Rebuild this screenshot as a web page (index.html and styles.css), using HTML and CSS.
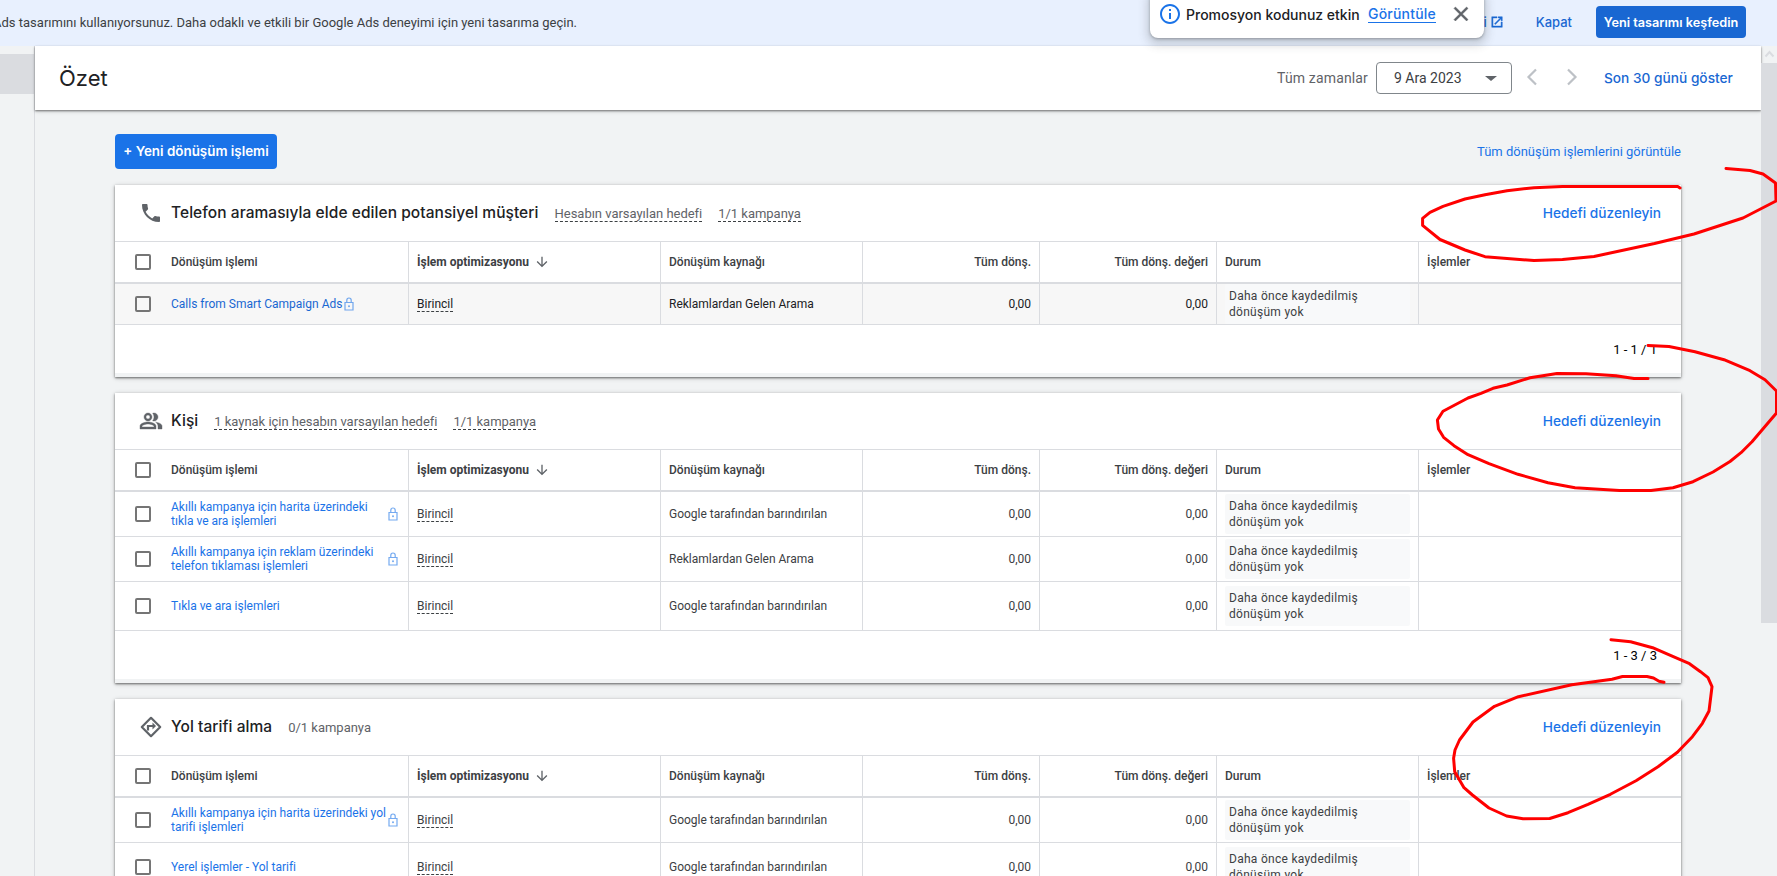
FILE: index.html
```html
<!DOCTYPE html>
<html lang="tr">
<head>
  <meta charset="UTF-8" />
  <meta name="viewport" content="width=device-width, initial-scale=1.0"/>
  <title>Özet - Google Ads</title>
  <link rel="stylesheet" href="styles.css">
</head>
<body>
  <!-- icons used more than once -->
  <svg class="sprite" aria-hidden="true">
    <symbol id="lock" viewBox="0 0 10 14">
      <path d="M1 5.5h8v7.5H1zM2.8 5.5V3.2a2.2 2.2 0 0 1 4.4 0v2.3" fill="none" stroke="currentColor" stroke-width="1.2"/>
      <circle cx="5" cy="9.2" r="1" fill="currentColor"/>
    </symbol>
    <symbol id="sort" viewBox="0 0 24 24">
      <path d="M20 12l-1.41-1.41L13 16.17V4h-2v12.17l-5.58-5.59L4 12l8 8 8-8z" fill="currentColor"/>
    </symbol>
  </svg>

  <div class="banner">
    <p class="banner-text">Ads tasarımını kullanıyorsunuz. Daha odaklı ve etkili bir Google Ads deneyimi için yeni tasarıma geçin.</p>
    <div class="banner-actions">
      <a class="more-link">i
        <svg width="14" height="14" viewBox="0 0 24 24"><path fill="currentColor" d="M19 19H5V5h7V3H3v18h18v-9h-2v7zM14 3v2h3.59l-9.83 9.83 1.41 1.41L19 6.41V10h2V3h-7z" stroke="currentColor" stroke-width=".8"/></svg>
      </a>
      <a class="dismiss">Kapat</a>
      <button class="try-new">Yeni tasarımı keşfedin</button>
    </div>
  </div>

  <div class="toast">
    <svg width="24" height="24" viewBox="0 0 24 24"><path fill="#1a73e8" d="M11 7h2v2h-2zm0 4h2v6h-2zm1-9C6.48 2 2 6.48 2 12s4.48 10 10 10 10-4.48 10-10S17.52 2 12 2zm0 18c-4.41 0-8-3.59-8-8s3.59-8 8-8 8 3.59 8 8-3.59 8-8 8z"/></svg>
    <span class="toast-text">Promosyon kodunuz etkin</span>
    <a class="toast-link">Görüntüle</a>
    <svg width="24" height="24" viewBox="0 0 24 24"><path fill="#5f6368" stroke="#5f6368" stroke-width=".5" d="M19 6.41L17.59 5 12 10.59 6.41 5 5 6.41 10.59 12 5 17.59 6.41 19 12 13.41 17.59 19 19 17.59 13.41 12z"/></svg>
  </div>

  <div class="app">
    <div class="nav"><div class="nav-active"></div></div>

    <div class="main">
      <div class="header">
        <h1>Özet</h1>
        <div class="period">
          <span class="range">Tüm zamanlar</span>
          <div class="date">9 Ara 2023 <span class="caret"></span></div>
          <svg class="prev" width="12" height="18" viewBox="0 0 12 18"><path d="M10 1.5L2.5 9l7.5 7.5" fill="none" stroke="#bdc1c6" stroke-width="2.2"/></svg>
          <svg class="next" width="12" height="18" viewBox="0 0 12 18"><path d="M2 1.5L9.5 9L2 16.5" fill="none" stroke="#bdc1c6" stroke-width="2.2"/></svg>
          <a class="last30">Son 30 günü göster</a>
        </div>
      </div>

      <div class="content">
        <div class="actions">
          <button class="new-action">+ Yeni dönüşüm işlemi</button>
          <a class="view-all">Tüm dönüşüm işlemlerini görüntüle</a>
        </div>

        <div class="card">
          <div class="card-head">
            <svg width="24" height="24" viewBox="0 0 24 24"><path fill="#5f6368" d="M6.62 10.79c1.44 2.83 3.76 5.14 6.59 6.59l2.2-2.2c.27-.27.67-.36 1.02-.24 1.12.37 2.33.57 3.57.57.55 0 1 .45 1 1V20c0 .55-.45 1-1 1-9.39 0-17-7.61-17-17 0-.55.45-1 1-1h3.5c.55 0 1 .45 1 1 0 1.25.2 2.45.57 3.57.11.35.03.74-.25 1.02l-2.2 2.2z"/></svg>
            <h2>Telefon aramasıyla elde edilen potansiyel müşteri</h2>
            <span class="meta dashed">Hesabın varsayılan hedefi</span>
            <span class="meta dashed">1/1 kampanya</span>
            <a class="edit">Hedefi düzenleyin</a>
          </div>
          <div class="row head">
            <div class="cell"><span class="box"></span>Dönüşüm işlemi</div>
            <div class="cell sorted">İşlem optimizasyonu <svg width="16" height="16"><use href="#sort"/></svg></div>
            <div class="cell">Dönüşüm kaynağı</div>
            <div class="cell num">Tüm dönş.</div>
            <div class="cell num">Tüm dönş. değeri</div>
            <div class="cell">Durum</div>
            <div class="cell">İşlemler</div>
          </div>
          <div class="row hovered">
            <div class="cell"><span class="box"></span><a class="name">Calls from Smart Campaign Ads</a><svg class="lock" width="10" height="14"><use href="#lock"/></svg></div>
            <div class="cell"><span class="dashed">Birincil</span></div>
            <div class="cell">Reklamlardan Gelen Arama</div>
            <div class="cell num">0,00</div>
            <div class="cell num">0,00</div>
            <div class="cell"><div class="status">Daha önce kaydedilmiş dönüşüm yok</div></div>
            <div class="cell"></div>
          </div>
          <div class="pager">1 - 1 / 1</div>
        </div>

        <div class="card">
          <div class="card-head">
            <svg width="24" height="24" viewBox="0 0 24 24"><path fill="#5f6368" stroke="#5f6368" stroke-width=".4" d="M16.67 13.13C18.04 14.06 19 15.32 19 17v3h4v-3c0-2.18-3.57-3.47-6.33-3.87zM15 12c2.21 0 4-1.79 4-4s-1.79-4-4-4c-.47 0-.91.1-1.33.24C14.5 5.27 15 6.58 15 8s-.5 2.73-1.33 3.76c.42.14.86.24 1.33.24zM9 12c2.21 0 4-1.79 4-4s-1.79-4-4-4-4 1.79-4 4 1.79 4 4 4zm0-6c1.1 0 2 .9 2 2s-.9 2-2 2-2-.9-2-2 .9-2 2-2zM9 13c-2.67 0-8 1.34-8 4v3h16v-3c0-2.66-5.33-4-8-4zm6 5H3v-.99C3.2 16.29 6.3 15 9 15s5.8 1.29 6 2v1z"/></svg>
            <h2>Kişi</h2>
            <span class="meta dashed">1 kaynak için hesabın varsayılan hedefi</span>
            <span class="meta dashed">1/1 kampanya</span>
            <a class="edit">Hedefi düzenleyin</a>
          </div>
          <div class="row head">
            <div class="cell"><span class="box"></span>Dönüşüm işlemi</div>
            <div class="cell sorted">İşlem optimizasyonu <svg width="16" height="16"><use href="#sort"/></svg></div>
            <div class="cell">Dönüşüm kaynağı</div>
            <div class="cell num">Tüm dönş.</div>
            <div class="cell num">Tüm dönş. değeri</div>
            <div class="cell">Durum</div>
            <div class="cell">İşlemler</div>
          </div>
          <div class="row">
            <div class="cell"><span class="box"></span><a class="name wrap">Akıllı kampanya için harita üzerindeki<br>tıkla ve ara işlemleri</a><svg class="lock" width="10" height="14"><use href="#lock"/></svg></div>
            <div class="cell"><span class="dashed">Birincil</span></div>
            <div class="cell">Google tarafından barındırılan</div>
            <div class="cell num">0,00</div>
            <div class="cell num">0,00</div>
            <div class="cell"><div class="status">Daha önce kaydedilmiş dönüşüm yok</div></div>
            <div class="cell"></div>
          </div>
          <div class="row">
            <div class="cell"><span class="box"></span><a class="name wrap">Akıllı kampanya için reklam üzerindeki<br>telefon tıklaması işlemleri</a><svg class="lock" width="10" height="14"><use href="#lock"/></svg></div>
            <div class="cell"><span class="dashed">Birincil</span></div>
            <div class="cell">Reklamlardan Gelen Arama</div>
            <div class="cell num">0,00</div>
            <div class="cell num">0,00</div>
            <div class="cell"><div class="status">Daha önce kaydedilmiş dönüşüm yok</div></div>
            <div class="cell"></div>
          </div>
          <div class="row tall">
            <div class="cell"><span class="box"></span><a class="name">Tıkla ve ara işlemleri</a></div>
            <div class="cell"><span class="dashed">Birincil</span></div>
            <div class="cell">Google tarafından barındırılan</div>
            <div class="cell num">0,00</div>
            <div class="cell num">0,00</div>
            <div class="cell"><div class="status">Daha önce kaydedilmiş dönüşüm yok</div></div>
            <div class="cell"></div>
          </div>
          <div class="pager">1 - 3 / 3</div>
        </div>

        <div class="card">
          <div class="card-head">
            <svg width="24" height="24" viewBox="0 0 24 24"><path d="M12 2.8L21.2 12L12 21.2L2.800 12z" fill="none" stroke="#5f6368" stroke-width="2.2" stroke-linejoin="round"/><path d="M9 15.5V11h5.5" fill="none" stroke="#5f6368" stroke-width="2.2"/><path d="M13.5 7.500L17 11l-3.5 3.5z" fill="#5f6368"/></svg>
            <h2>Yol tarifi alma</h2>
            <span class="meta">0/1 kampanya</span>
            <a class="edit">Hedefi düzenleyin</a>
          </div>
          <div class="row head">
            <div class="cell"><span class="box"></span>Dönüşüm işlemi</div>
            <div class="cell sorted">İşlem optimizasyonu <svg width="16" height="16"><use href="#sort"/></svg></div>
            <div class="cell">Dönüşüm kaynağı</div>
            <div class="cell num">Tüm dönş.</div>
            <div class="cell num">Tüm dönş. değeri</div>
            <div class="cell">Durum</div>
            <div class="cell">İşlemler</div>
          </div>
          <div class="row">
            <div class="cell"><span class="box"></span><a class="name wrap">Akıllı kampanya için harita üzerindeki yol<br>tarifi işlemleri</a><svg class="lock" width="10" height="14"><use href="#lock"/></svg></div>
            <div class="cell"><span class="dashed">Birincil</span></div>
            <div class="cell">Google tarafından barındırılan</div>
            <div class="cell num">0,00</div>
            <div class="cell num">0,00</div>
            <div class="cell"><div class="status">Daha önce kaydedilmiş dönüşüm yok</div></div>
            <div class="cell"></div>
          </div>
          <div class="row tall">
            <div class="cell"><span class="box"></span><a class="name">Yerel işlemler - Yol tarifi</a></div>
            <div class="cell"><span class="dashed">Birincil</span></div>
            <div class="cell">Google tarafından barındırılan</div>
            <div class="cell num">0,00</div>
            <div class="cell num">0,00</div>
            <div class="cell"><div class="status">Daha önce kaydedilmiş dönüşüm yok</div></div>
            <div class="cell"></div>
          </div>
        </div>
      </div>
    </div>

    <div class="scrollbar">
      <svg width="16" height="17" viewBox="0 0 16 17"><path d="M4.5 10.5L8.500 6l4 4.5" fill="none" stroke="#dadce0" stroke-width="2"/></svg>
      <div class="thumb"></div>
    </div>
  </div>

  <!-- red pen marks around the edit links -->
  <svg class="marks" width="1777" height="876" viewBox="0 0 1777 876">
    <polyline points="1726,168.5 1750,170.5 1763,174 1770,179 1775.5,183 1776,201 1743,218 1694,234 1654.5,243.5 1594,256.5 1562.5,259.5 1534,260.5 1485,256.7 1465,250 1440,239.5 1422.6,225.3 1422.6,218.3 1430,212.3 1443,206.3 1465,199 1485,194.7 1507,190.7 1534,187.7 1562.5,186.5 1677.7,186.5 1680,188"/>
    <polyline points="1648,345.5 1669,346.5 1695,351.7 1724,359.7 1750,370.7 1765,379.7 1776.5,391 1776.5,413 1752,441.7 1741,452.7 1730,461.5 1713,472 1693,481.7 1673,487.7 1651,490.5 1619.5,490.5 1575,487.7 1548,482.7 1518,474.3 1489,463.7 1468,454.7 1454,445.7 1443.6,437.3 1438.5,429 1437.4,420 1443,411.3 1468,398 1481,393.3 1493,388.3 1507,385 1530,377.7 1557,373.5 1586,373.7 1616,375.7 1634,378.5 1648,378.5"/>
    <polyline points="1611,639.7 1630.6,641.7 1652.6,647.7 1671,655.7 1689.5,663.7 1700.5,671.7 1708,677.7 1712,686.7 1709,711 1702.4,723.3 1692.4,736.7 1677.4,752.3 1658,766.7 1636,780.7 1610.4,794.3 1588,804.3 1568,812.7 1549.7,818.5 1523,818.7 1506.6,816 1489,808 1472.4,795 1464,787.7 1454.7,771.7 1453.6,758.3 1455,750 1459.5,740 1473,722 1494.5,706.3 1518.4,696.7 1571.8,684.7 1612,679.3 1622.5,676.5 1647,676.5 1653.5,678 1659,681.3 1664,682.3"/>
  </svg>
</body>
</html>
```
FILE: styles.css
```css
* {
  margin: 0;
  padding: 0;
  box-sizing: border-box;
}
body {
  font-family: Roboto, Arial, sans-serif;
  font-size: 12px;
  color: #3c4043;
  background-color: #f1f3f4;
  height: 876px;
  overflow: hidden;
  position: relative;
}
h1, h2, button, .toast, .last30, .edit, .dismiss, .more-link {
  font-family: Inter, Roboto, sans-serif;
}
a {
  color: #1a73e8;
  text-decoration: none;
}
svg {
  flex: none;
}
.sprite {
  display: none;
}

/* top banner */
.banner {
  height: 46px;
  background-color: #e8f0fe;
  display: flex;
  align-items: center;
  justify-content: space-between;
}
.banner-text {
  width: 577px;
  display: flex;
  justify-content: flex-end;
  white-space: nowrap;
  font-size: 13px;
  padding-bottom: 2px;
}
.banner-actions {
  display: flex;
  align-items: center;
  padding: 0 31px 2px 0;
}
.banner-actions a {
  color: #1967d2;
  font-size: 13px;
  font-weight: 500;
}
.more-link {
  display: flex;
  align-items: center;
  gap: 3px;
  margin-right: 32px;
}
.dismiss {
  margin-right: 24px;
}
button {
  border: none;
  border-radius: 4px;
  color: #fff;
  font-weight: 600;
  white-space: nowrap;
}
.try-new {
  width: 150px;
  height: 32px;
  font-size: 12.7px;
  background-color: #1967d2;
}

.toast {
  position: absolute;
  left: 1150px;
  top: -10px;
  width: 334px;
  height: 48px;
  padding: 0 11px 0 8px;
  display: flex;
  align-items: center;
  background-color: #fff;
  border-radius: 8px;
  box-shadow: 0 1px 3px rgba(60, 64, 67, 0.4), 0 4px 10px 3px rgba(60, 64, 67, 0.2);
  font-size: 14px;
  font-weight: 500;
  color: #202124;
  z-index: 2;
}
.toast-text {
  margin-left: 4px;
  width: 182px;
  white-space: nowrap;
}
.toast-link {
  border-bottom: 1px solid #1a73e8;
  line-height: 16px;
  letter-spacing: 0.2px;
  margin-right: auto;
}

.app {
  display: flex;
  height: 830px;
}
.nav {
  width: 35px;
  border-right: 1px solid #dadce0;
  padding-top: 8px;
}
.nav-active {
  height: 40px;
  background-color: #dadce0;
}
.main {
  width: 1726px;
}

.header {
  height: 64px;
  padding: 0 27px 0 24px;
  background-color: #fff;
  box-shadow: 0 1px 2px rgba(0, 0, 0, 0.5), 0 2px 4px rgba(0, 0, 0, 0.1);
  display: flex;
  align-items: center;
  justify-content: space-between;
}
h1 {
  font-size: 22px;
  font-weight: 400;
  color: #202124;
}
.period {
  display: flex;
  align-items: center;
  font-size: 14px;
}
.range {
  color: #5f6368;
  letter-spacing: 0.15px;
  margin-right: 8px;
}
.date {
  width: 136px;
  height: 32px;
  padding: 0 14px 0 17px;
  border: 1px solid #80868b;
  border-radius: 4px;
  display: flex;
  align-items: center;
  justify-content: space-between;
}
.caret {
  border: 6px solid transparent;
  border-top: 5px solid #5f6368;
  border-bottom: 0;
}
.prev {
  margin: 0 28px 2px 14px;
}
.next {
  margin: 0 26px 2px 0;
}
.last30, .edit {
  font-size: 13.7px;
  font-weight: 500;
}
.last30 {
  color: #1967d2;
  width: 130px;
  white-space: nowrap;
}

.content {
  padding: 24px 80px 0;
}
.actions {
  display: flex;
  align-items: center;
  justify-content: space-between;
  margin-bottom: 16px;
}
.new-action {
  width: 162px;
  height: 35px;
  font-size: 13.4px;
  padding-bottom: 1px;
  background-color: #1a73e8;
}
.view-all {
  font-size: 13px;
}

.card {
  background-color: #fff;
  border-bottom: 4px solid #f1f3f4;
  margin-bottom: 16px;
  box-shadow: 0 1px 2px rgba(0, 0, 0, 0.5), 0 1px 5px rgba(0, 0, 0, 0.2);
}
.card-head {
  height: 57px;
  padding: 0 20px 0 24px;
  border-bottom: 1px solid #dadce0;
  display: flex;
  align-items: center;
}
h2 {
  font-size: 15.5px;
  font-weight: 500;
  letter-spacing: 0.06px;
  color: #202124;
  margin: 0 16px 1px 8px;
}
.meta {
  font-size: 13px;
  letter-spacing: -0.02px;
  color: #5f6368;
  margin-right: 16px;
}
.dashed {
  border-bottom: 1px dashed #3c4043;
}
.meta.dashed {
  margin-top: 1px;
}
.cell .dashed {
  margin-top: 1px;
}
.edit {
  margin-left: auto;
  padding-bottom: 1px;
}

.row {
  display: grid;
  grid-template-columns: 294px 252px 202px 177px 177px 202px 262px;
  height: 45px;
  border-bottom: 1px solid #dadce0;
}
.row.tall {
  height: 49px;
}
.row.head {
  height: 42px;
  border-bottom-width: 2px;
  font-weight: 500;
}
.row.hovered {
  height: 41px;
  background-color: #f7f7f7;
  color: #202124;
}
.cell {
  display: flex;
  align-items: center;
  padding: 0 8px;
  border-right: 1px solid #dadce0;
  white-space: nowrap;
}
.cell:first-child {
  padding-left: 20px;
}
.cell:last-child {
  border-right: none;
}
.num {
  justify-content: flex-end;
}
.sorted {
  font-weight: 700;
}
.sorted svg {
  margin-left: 5px;
  color: #5f6368;
}
.box {
  width: 16px;
  height: 16px;
  border: 2px solid #757575;
  border-radius: 2px;
  margin-right: 20px;
}
.name {
  line-height: 14px;
}
.name.wrap {
  width: 217px;
}
.hovered .name {
  color: #1967d2;
}
.lock {
  color: #1a73e8;
  opacity: 0.6;
  margin-left: 2px;
}
.wrap + .lock {
  margin-left: 0;
}
.status {
  width: 185px;
  height: 40px;
  padding: 4px 40px 4px 4px;
  line-height: 16px;
  letter-spacing: 0.28px;
  white-space: normal;
  color: #3c4043;
  background-color: #f8f9fa;
  border-radius: 2px;
}
.pager {
  height: 48px;
  padding-right: 24px;
  display: flex;
  align-items: center;
  justify-content: flex-end;
  font-size: 13px;
  color: #000;
}

.scrollbar {
  width: 16px;
}
.scrollbar svg {
  display: block;
}
.thumb {
  height: 560px;
  background-color: #dadce0;
}

.marks {
  position: absolute;
  left: 0;
  top: 0;
  z-index: 3;
  pointer-events: none;
}
.marks polyline {
  fill: none;
  stroke: #f00;
  stroke-width: 3;
  stroke-linecap: round;
  stroke-linejoin: round;
}
```
